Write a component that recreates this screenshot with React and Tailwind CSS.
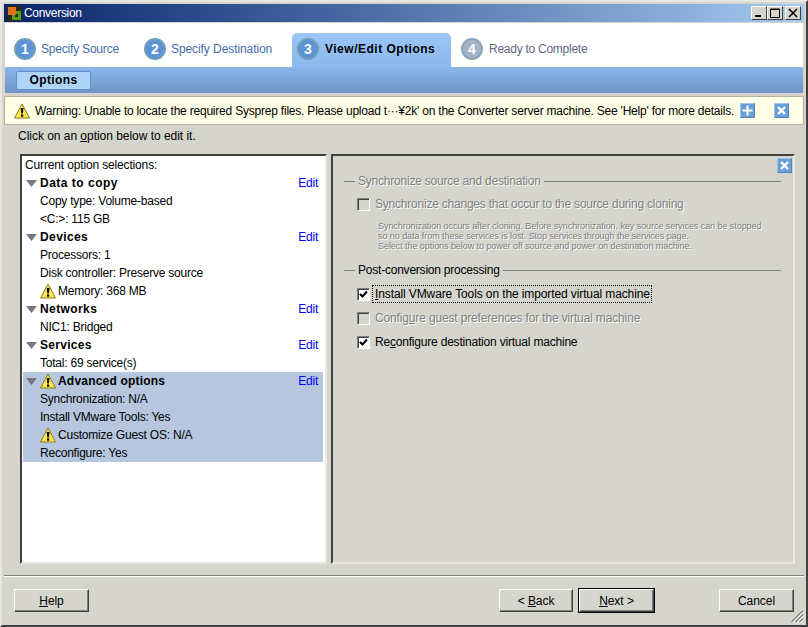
import React from "react";

const Warn = ({ s = 16 }) => (
  <svg width={s} height={s} viewBox="0 0 16 16" className="shrink-0">
    <path d="M8 1 L15.5 15 L0.5 15 Z" fill="#ffe94a" stroke="#8a7a20" strokeWidth="1" strokeLinejoin="round" />
    <path d="M6.7 5 H9.5 L8.9 10.5 H7.3 Z" fill="#000" />
    <rect x="7" y="11.5" width="2.2" height="2.2" fill="#000" />
  </svg>
);

const Tri = () => (
  <svg width="11" height="7" viewBox="0 0 11 7" className="shrink-0">
    <path d="M0 0 H11 L5.5 7 Z" fill="#77777f" />
  </svg>
);

const Step = ({ n, label, w, dim, track }) => (
  <div className={`flex items-center h-[34px] pb-[2px] ${w}`}>
    <div className={`w-[22px] h-[22px] rounded-full border-2 flex items-center justify-center text-white font-bold text-[14px] shrink-0 ${dim ? "bg-[#a3b4c9] border-[#8ea5b5]" : "bg-[#5c93d6] border-[#6f9fb8]"}`}>{n}</div>
    <span className={`whitespace-nowrap ${track} ${dim ? "text-[#5d6a80]" : "text-[#3f6ea8]"}`}>{label}</span>
  </div>
);

const Btn = ({ children, w, def }) => (
  <div className={`${w} flex items-center justify-center text-black tracking-[-0.05px] ${def ? "h-[25px] border border-black" : ""}`}>
    <div className="w-full h-[23px] flex items-center justify-center border border-t-white border-l-white border-r-[#404040] border-b-[#404040] shadow-[inset_-1px_-1px_0_#808080]">{children}</div>
  </div>
);

const Row = ({ children, edit, head, warn, sel, top, track = "tracking-[-0.22px]" }) => (
  <div className={`h-[18px] flex items-center pr-[5px] whitespace-nowrap ${sel ? "bg-[#b5c6de]" : ""}`}>
    {top ? (
      <span className="ml-[2px] tracking-[-0.15px]">{children}</span>
    ) : head ? (
      <>
        <div className="ml-[3px] w-[14px]"><Tri /></div>
        {warn && <div className="mr-[2px]"><Warn /></div>}
        <span className={`font-bold ${track}`}>{children}</span>
      </>
    ) : (
      <div className="ml-[17px] flex items-center tracking-[-0.22px]">
        {warn && <div className="mr-[2px]"><Warn /></div>}
        <span>{children}</span>
      </div>
    )}
    {edit && <span className="ml-auto text-[#0000ff] tracking-[-0.25px]">Edit</span>}
  </div>
);

const Check = ({ on, dis }) => (
  <div className={`w-[13px] h-[13px] shrink-0 border border-t-[#808080] border-l-[#808080] border-r-white border-b-white shadow-[inset_1px_1px_0_#404040] flex items-center justify-center ${dis ? "bg-[#d5d4cd]" : "bg-white"}`}>
    {on && (
      <svg width="9" height="9" viewBox="0 0 9 9">
        <path d="M1 4 L3.5 6.5 L8 1.5" fill="none" stroke="#000" strokeWidth="2" />
      </svg>
    )}
  </div>
);

const Legend = ({ children, dis }) => (
  <div className="flex items-center h-[14px] ml-[11px] mr-[12px]">
    <div className="h-px w-[11px] bg-[#808080] shrink-0" />
    <span className={`mx-[3px] whitespace-nowrap tracking-[-0.22px] ${dis ? "text-[#808080] [text-shadow:1px_1px_0_#fff]" : "text-black"}`}>{children}</span>
    <div className="h-px flex-1 bg-[#808080]" />
  </div>
);

const CloseBox = ({ s = 15 }) => (
  <svg width={s} height={s} viewBox="0 0 15 15" className="shrink-0">
    <rect width="15" height="15" rx="1" fill="#6aa0d8" />
    <path d="M0.5 14.5 V0.5 H14.5" fill="none" stroke="#9cc4ea" />
    <path d="M14.5 0.5 V14.5 H0.5" fill="none" stroke="#4f84bc" />
    <path d="M4 4 L11 11 M11 4 L4 11" stroke="#fff" strokeWidth="2.4" />
  </svg>
);

export default function App() {
  return (
    <div className="w-[808px] h-[627px] flex flex-col bg-[#d5d4cd] text-[12px] leading-[14px] text-black border-t-2 border-l-2 border-t-[#e8e6e0] border-l-[#e8e6e0] border-r-2 border-b-2 border-r-[#404040] border-b-[#404040] overflow-hidden" style={{ fontFamily: '"Liberation Sans", "Noto Sans CJK JP", sans-serif' }}>
      {/* title */}
      <div className="mt-[2px] mx-[2px] h-[18px] shrink-0 flex items-center bg-gradient-to-r from-[#0a246a] to-[#a6caf0] text-white">
        <svg width="15" height="15" viewBox="0 0 15 15" className="ml-[3px] shrink-0">
          <rect x="0" y="0" width="15" height="15" fill="#2a2a10" />
          <rect x="5" y="5" width="9" height="9" fill="#5a9a20" />
          <rect x="8" y="8" width="3" height="3" fill="#2a2a10" />
          <rect x="1" y="1" width="8" height="8" fill="#e0701c" />
        </svg>
        <span className="ml-[2px] tracking-[-0.3px]">Conversion</span>
        <div className="ml-auto mr-[3px] flex">
          {[0, 1, 2].map((i) => (
            <div key={i} className={`w-[16px] h-[14px] bg-[#d5d4cd] border border-t-white border-l-white border-r-[#404040] border-b-[#404040] flex items-center justify-center ${i === 1 ? "mr-[2px]" : ""}`}>
              <svg width="10" height="10" viewBox="0 0 10 10">
                {i === 0 && <rect x="1" y="7" width="6" height="2" fill="#000" />}
                {i === 1 && <path d="M0.5 1.5 H9.5 V9.5 H0.5 Z M0.5 1 H9.5" fill="none" stroke="#000" />}
                {i === 2 && <path d="M1 1 L9 9 M9 1 L1 9" stroke="#000" strokeWidth="1.6" />}
              </svg>
            </div>
          ))}
        </div>
      </div>
      {/* header */}
      <div className="mt-px mx-[3px] h-[44px] shrink-0 bg-white flex items-end pl-[9px]">
        <Step n="1" label="Specify Source" w="w-[130px]" track="ml-[5px] tracking-[-0.2px]" />
        <Step n="2" label="Specify Destination" w="w-[148px]" track="ml-[5px] tracking-[-0.08px]" />
        <div className="w-[159px] pl-[5px] pb-[2px] h-[34px] rounded-t-[5px] bg-gradient-to-b from-[#9cc6f8] to-[#8ab7ec] flex items-center">
          <div className="w-[22px] h-[22px] rounded-full border-2 bg-[#5c93d6] border-[#6f9fb8] flex items-center justify-center text-white font-bold text-[14px] shrink-0">3</div>
          <span className="ml-[6px] font-bold whitespace-nowrap tracking-[0.5px]">View/Edit Options</span>
        </div>
        <div className="ml-[10px]"><Step n="4" label="Ready to Complete" w="w-[140px]" dim track="ml-[6px] tracking-[-0.26px]" /></div>
      </div>
      {/* sub bar */}
      <div className="mx-[3px] h-[26px] shrink-0 bg-gradient-to-b from-[#8ab7ec] to-[#6f94c6] flex items-center pl-[11px]">
        <div className="w-[75px] h-[19px] bg-[#aed4f8] border border-[#5f93c8] rounded-[2px] flex items-center justify-center font-bold tracking-[0.4px]">Options</div>
      </div>
      {/* warning */}
      <div className="mt-[3px] mx-[2px] h-[29px] shrink-0 bg-[#ffffe8] border border-[#b0b09c] flex items-center pl-[9px] pr-[14px]">
        <Warn />
        <span className="ml-[5px] whitespace-nowrap tracking-[-0.21px]">Warning: Unable to locate the required Sysprep files. Please upload t···¥2k' on the Converter server machine. See 'Help' for more details.</span>
        <div className="ml-auto flex gap-[19px]">
          <svg width="15" height="15" viewBox="0 0 15 15">
            <rect width="15" height="15" rx="1" fill="#6aa0d8" />
            <path d="M0.5 14.5 V0.5 H14.5" fill="none" stroke="#9cc4ea" />
            <path d="M14.5 0.5 V14.5 H0.5" fill="none" stroke="#4f84bc" />
            <path d="M7.5 2.5 V12.5 M2.5 7.5 H12.5" stroke="#fff" strokeWidth="2" />
          </svg>
          <CloseBox />
        </div>
      </div>
      <div className="mt-[4px] ml-[16px] h-[13px] shrink-0 tracking-[-0.03px]">Click on an <u>o</u>ption below to edit it.</div>
      {/* panels */}
      <div className="mt-[12px] ml-[18px] mr-[11px] h-[410px] shrink-0 flex gap-[4px]">
        <div className="w-[307px] shrink-0 h-full bg-white border-2 border-t-[#404040] border-l-[#404040] border-r-[#e8e6e0] border-b-[#e8e6e0] pl-px pr-[2px] overflow-hidden">
          <Row top>Current option selections:</Row>
          <Row head edit track="tracking-[0.5px]">Data to copy</Row>
          <Row>Copy type: Volume-based</Row>
          <Row>&lt;C:&gt;: 115 GB</Row>
          <Row head edit track="tracking-[0.4px]">Devices</Row>
          <Row>Processors: 1</Row>
          <Row>Disk controller: Preserve source</Row>
          <Row warn>Memory: 368 MB</Row>
          <Row head edit track="tracking-[0.4px]">Networks</Row>
          <Row>NIC1: Bridged</Row>
          <Row head edit track="tracking-[0.3px]">Services</Row>
          <Row>Total: 69 service(s)</Row>
          <Row head edit warn sel track="tracking-[0.2px]">Advanced options</Row>
          <Row sel>Synchronization: N/A</Row>
          <Row sel>Install VMware Tools: Yes</Row>
          <Row sel warn>Customize Guest OS: N/A</Row>
          <Row sel>Reconfigure: Yes</Row>
        </div>
        <div className="flex-1 min-w-0 h-full border-2 border-t-[#404040] border-l-[#404040] border-r-[#e8e6e0] border-b-[#e8e6e0] flex flex-col">
          <div className="h-[17px] pt-[2px] pr-px flex justify-end shrink-0"><CloseBox /></div>
          <div className="mt-[1px]"><Legend dis>Synchronize source and destination</Legend></div>
          <div className="mt-[9px] ml-[24px] h-[14px] flex items-center">
            <Check dis />
            <span className="ml-[5px] text-[#808080] [text-shadow:1px_1px_0_#fff] tracking-[-0.22px] whitespace-nowrap">S<u>y</u>nchronize changes that occur to the source during cloning</span>
          </div>
          <div className="mt-[10px] ml-[45px] text-[9px] leading-[10px] text-[#808080] [text-shadow:1px_1px_0_#fff] tracking-[-0.06px] whitespace-nowrap">
            <div>Synchronization occurs after cloning. Before synchronization, key source services can be stopped</div>
            <div>so no data from these services is lost. Stop services through the services page.</div>
            <div>Select the options below to power off source and power on destination machine.</div>
          </div>
          <div className="mt-[12px]"><Legend>Post-conversion processing</Legend></div>
          <div className="mt-[8px] ml-[24px] h-[18px] flex items-center">
            <Check on />
            <span className="ml-[2px] w-[280px] h-[18px] flex items-center pl-[2px] border border-dotted border-black tracking-[-0.11px] whitespace-nowrap"><u>I</u>nstall VMware Tools on the imported virtual machine</span>
          </div>
          <div className="mt-[6px] ml-[24px] h-[18px] flex items-center">
            <Check dis />
            <span className="ml-[5px] text-[#808080] [text-shadow:1px_1px_0_#fff] tracking-[-0.15px] whitespace-nowrap">Config<u>u</u>re guest preferences for the virtual machine</span>
          </div>
          <div className="mt-[6px] ml-[24px] h-[18px] flex items-center">
            <Check on />
            <span className="ml-[5px] tracking-[-0.2px] whitespace-nowrap">Re<u>c</u>onfigure destination virtual machine</span>
          </div>
        </div>
      </div>
      {/* footer */}
      <div className="mt-[11px] mx-[2px] h-[2px] shrink-0 border-t border-t-[#808080] border-b border-b-white" />
      <div className="relative flex-1 flex items-start pt-[12px] pl-[12px] pr-[12px]">
        <Btn w="w-[75px]"><span><u>H</u>elp</span></Btn>
        <div className="ml-auto flex items-center -mt-px">
          <Btn w="w-[74px]"><span>&lt; <u>B</u>ack</span></Btn>
          <div className="ml-[5px]"><Btn w="w-[77px]" def><span><u>N</u>ext &gt;</span></Btn></div>
          <div className="ml-[64px]"><Btn w="w-[75px]"><span>Cancel</span></Btn></div>
        </div>
        <svg width="13" height="13" viewBox="0 0 13 13" className="absolute right-[2px] bottom-[2px]">
          <path d="M12 0.5 L0.5 12 M12 4.5 L4.5 12 M12 8.5 L8.5 12" stroke="#808080" strokeWidth="1.2" />
          <path d="M12.5 2 L2 12.5 M12.5 6 L6 12.5 M12.5 10 L10 12.5" stroke="#fff" strokeWidth="1" />
        </svg>
      </div>
    </div>
  );
}
